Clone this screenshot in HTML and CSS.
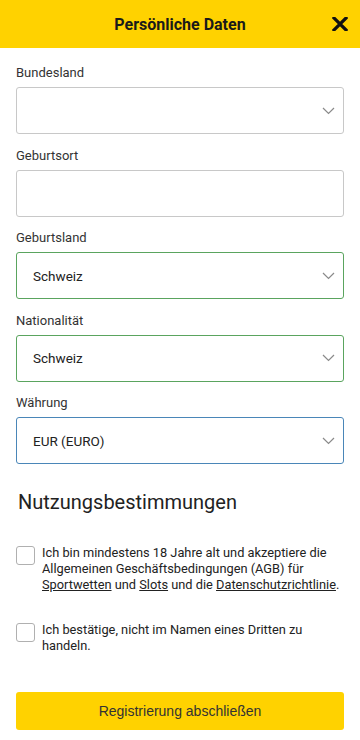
FILE: index.html
```html
<!DOCTYPE html>
<html lang="de">
<head>
    <meta charset="UTF-8">
    <meta name="viewport" content="width=device-width, initial-scale=1.0">
    <title>Persönliche Daten</title>
    <link rel="stylesheet" href="styles.css">
</head>
<body>
    <header class="topbar">
        <h1>Persönliche Daten</h1>
        <button class="close" aria-label="Schließen">
            <svg width="16" height="14" viewBox="0 0 16 14"><path d="M2 1 L14 13 M14 1 L2 13" stroke="#111" stroke-width="3.2" stroke-linecap="square"/></svg>
        </button>
    </header>

    <form class="form">
        <div class="field">
            <label>Bundesland</label>
            <div class="box select"><span></span>
                <svg class="chev" width="13" height="8" viewBox="0 0 13 8"><path d="M1 1 L6.5 6.5 L12 1" fill="none" stroke="#8a8a8a" stroke-width="1.2"/></svg>
            </div>
        </div>
        <div class="field">
            <label>Geburtsort</label>
            <div class="box"></div>
        </div>
        <div class="field">
            <label>Geburtsland</label>
            <div class="box select valid"><span>Schweiz</span>
                <svg class="chev" width="13" height="8" viewBox="0 0 13 8"><path d="M1 1 L6.5 6.5 L12 1" fill="none" stroke="#8a8a8a" stroke-width="1.2"/></svg>
            </div>
        </div>
        <div class="field">
            <label>Nationalität</label>
            <div class="box select valid"><span>Schweiz</span>
                <svg class="chev" width="13" height="8" viewBox="0 0 13 8"><path d="M1 1 L6.5 6.5 L12 1" fill="none" stroke="#8a8a8a" stroke-width="1.2"/></svg>
            </div>
        </div>
        <div class="field">
            <label>Währung</label>
            <div class="box select focus"><span>EUR (EURO)</span>
                <svg class="chev" width="13" height="8" viewBox="0 0 13 8"><path d="M1 1 L6.5 6.5 L12 1" fill="none" stroke="#8a8a8a" stroke-width="1.2"/></svg>
            </div>
        </div>

        <h2>Nutzungsbestimmungen</h2>

        <div class="check">
            <span class="tick"></span>
            <p>Ich bin mindestens 18 Jahre alt und akzeptiere die Allgemeinen Geschäftsbedingungen (AGB) für <a href="#">Sportwetten</a> und <a href="#">Slots</a> und die <a href="#">Datenschutzrichtlinie</a>.</p>
        </div>
        <div class="check second">
            <span class="tick"></span>
            <p>Ich bestätige, nicht im Namen eines Dritten zu handeln.</p>
        </div>

        <button type="button" class="submit">Registrierung abschließen</button>
    </form>
</body>
</html>
```

FILE: styles.css
```css
body {
    margin: 0;
    font-family: Roboto, 'Noto Sans', sans-serif;
    background-color: #fff;
    color: #333;
}
.topbar {
    height: 48px;
    background-color: #ffd200;
    display: flex;
    align-items: center;
    justify-content: center;
    position: relative;
}
.topbar h1 {
    margin: 0;
    font-size: 16px;
    font-weight: 700;
    color: #1a1a1a;
}
.close {
    position: absolute;
    right: 12px;
    top: 17px;
    padding: 0;
    border: none;
    background: none;
    line-height: 0;
}
.form {
    padding: 17px 16px 0 16px;
}
.field {
    margin-bottom: 13.5px;
}
.field label {
    display: block;
    font-size: 13px;
    line-height: 16px;
    color: #333;
    margin-bottom: 6px;
}
.box {
    height: 45px;
    border: 1px solid #c8c8c8;
    border-radius: 3px;
    display: flex;
    align-items: center;
    justify-content: space-between;
    padding: 0 8px 0 16px;
    font-size: 13.5px;
    color: #222;
}
.box.valid {
    border-color: #5aa45e;
}
.box.focus {
    border-color: #4a86b8;
}
h2 {
    margin: 26px 0 0 2px;
    font-size: 20px;
    font-weight: 400;
    color: #222;
    line-height: 24px;
}
.check {
    display: flex;
    align-items: flex-start;
    margin-top: 31px;
}
.check.second {
    margin-top: 29px;
}
.tick {
    flex: none;
    width: 17px;
    height: 17px;
    border: 1px solid #b0b0b0;
    border-radius: 3px;
    margin-top: 1px;
}
.check p {
    margin: 0 -4px 0 7px;
    font-size: 12.8px;
    line-height: 16px;
    color: #222;
}
.check a {
    color: #222;
    text-decoration: underline;
}
.submit {
    display: block;
    width: 100%;
    height: 38px;
    margin-top: 38px;
    border: none;
    border-radius: 3px;
    background-color: #ffd200;
    font-family: 'Liberation Sans', Arial, sans-serif;
    font-size: 14px;
    color: #333;
}
```
